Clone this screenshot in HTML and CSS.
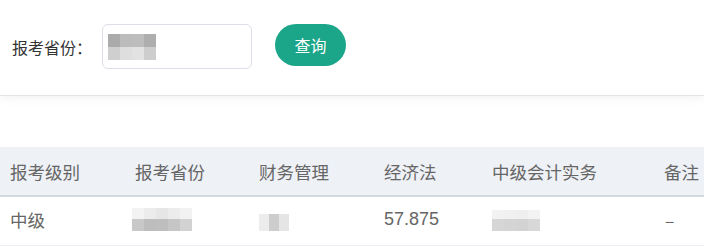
FILE: index.html
```html
<!DOCTYPE html>
<html lang="zh">
<head>
<meta charset="utf-8">
<link rel="stylesheet" href="styles.css">
</head>
<body>
<div class="panel">
  <label class="label">报考省份：</label>
  <div class="input">
    <div class="mosaic m-input">
      <i style="background:#ababab"></i><i style="background:#bcbcbc"></i><i style="background:#bdbdbd"></i><i style="background:#aeaeae"></i>
      <i style="background:#cfcfcf"></i><i style="background:#dedede"></i><i style="background:#e2e2e2"></i><i style="background:#cdcdcd"></i>
    </div>
  </div>
  <button class="btn">查询</button>
</div>
<div class="table">
  <div class="row head">
    <div class="cell">报考级别</div>
    <div class="cell">报考省份</div>
    <div class="cell">财务管理</div>
    <div class="cell">经济法</div>
    <div class="cell">中级会计实务</div>
    <div class="cell">备注</div>
  </div>
  <div class="row body">
    <div class="cell">中级</div>
    <div class="cell">
      <div class="mosaic m-prov">
        <i style="background:#f3f3f3"></i><i style="background:#ececec"></i><i style="background:#e6e6e6"></i><i style="background:#ececec"></i><i style="background:#f2f2f2"></i>
        <i style="background:#c8c8c8"></i><i style="background:#bdbdbd"></i><i style="background:#bebebe"></i><i style="background:#c6c6c6"></i><i style="background:#d2d2d2"></i>
      </div>
    </div>
    <div class="cell">
      <div class="mosaic m-fin">
        <i style="background:#ececec"></i><i style="background:#cdcdcd"></i><i style="background:#e5e5e5"></i>
      </div>
    </div>
    <div class="cell num">57.875</div>
    <div class="cell">
      <div class="mosaic m-acc">
        <i style="background:#f2f2f2"></i><i style="background:#f1f1f1"></i><i style="background:#efefef"></i><i style="background:#f3f3f3"></i>
        <i style="background:#d6d6d6"></i><i style="background:#d4d4d4"></i><i style="background:#d3d3d3"></i><i style="background:#d8d8d8"></i>
      </div>
    </div>
    <div class="cell dash">–</div>
  </div>
</div>
</body>
</html>
```
FILE: styles.css
```css
* { box-sizing: border-box; }
html, body { margin: 0; padding: 0; background: #fff; }
body {
  font-family: "Noto Sans CJK SC", "Noto Sans", sans-serif;
  color: #606266;
  width: 704px;
  height: 250px;
  overflow: hidden;
}
.panel {
  height: 96px;
  display: flex;
  align-items: center;
  padding: 0 0 2px 12px;
  background: #fff;
  border-bottom: 1px solid #e4e4e4;
  box-shadow: 0 2px 10px rgba(0,0,0,0.06);
  position: relative;
}
.label {
  font-size: 16px;
  color: #333;
  width: 90px;
}
.input {
  width: 150px;
  height: 45px;
  border: 1px solid #dcdfe6;
  border-radius: 6px;
  display: flex;
  align-items: center;
  padding-left: 5px;
}
.btn {
  margin-left: 23px;
  width: 71px;
  height: 42px;
  border: none;
  border-radius: 21px;
  background: #1ba68a;
  color: #fff;
  font-family: inherit;
  font-size: 16px;
  padding: 0;
  margin-top: -3px;
}
.mosaic { display: grid; }
.mosaic i { display: block; }
.m-input { grid-template-columns: repeat(4, 12px); grid-template-rows: 13px 13px; }
.m-prov { grid-template-columns: repeat(5, 12px); grid-template-rows: 11px 12px; margin-left: -3px; }
.m-fin { grid-template-columns: 10px 10px 10px; grid-template-rows: 17px; margin-top: 6px; }
.m-acc { grid-template-columns: repeat(4, 12px); grid-template-rows: 9px 12px; margin-top: 2px; }
.table { margin-top: 51px; }
.row {
  display: grid;
  grid-template-columns: 125px 124px 125px 108px 172px 60px;
  padding-left: 10px;
  align-items: center;
}
.head {
  height: 50px;
  background: #eef1f6;
  border-bottom: 2px solid #d3d7de;
  color: #666;
}
.body {
  height: 49px;
  border-bottom: 1px solid #ebeef5;
  color: #666;
  padding-bottom: 3px;
}
.cell {
  font-size: 17.5px;
  white-space: nowrap;
}
.num { font-family: "Liberation Sans", "Noto Sans", sans-serif; font-size: 18px; }
.dash { padding-left: 1px; }
```
